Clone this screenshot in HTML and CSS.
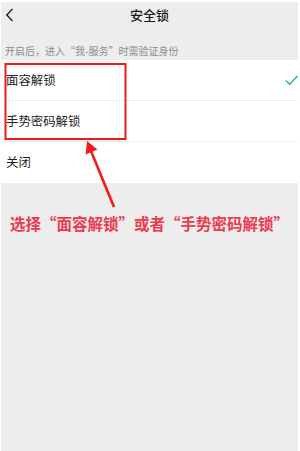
FILE: index.html
```html
<!DOCTYPE html>
<html lang="zh">
<head>
<meta charset="utf-8">
<link rel="stylesheet" href="styles.css">
</head>
<body>
<div class="page">
  <div class="nav">
    <div class="back">
      <svg width="9" height="14" viewBox="0 0 9 14"><path d="M7.5 1 L1.8 7 L7.5 13" fill="none" stroke="#222" stroke-width="1.4"/></svg>
    </div>
    <div class="title">安全锁</div>
    <div></div>
  </div>
  <div class="hint">开启后，进入“我-服务”时需验证身份</div>
  <div class="list">
    <div class="row"><span>面容解锁</span>
      <svg class="check" width="13" height="11" viewBox="0 0 13 11"><path d="M0.8 5.5 L4.6 9.3 L12.5 1" fill="none" stroke="#1fc063" stroke-width="1.4"/></svg>
    </div>
    <div class="row"><span>手势密码解锁</span></div>
    <div class="row"><span>关闭</span></div>
  </div>
  <div class="note">选择“面容解锁”或者“手势密码解锁”</div>
</div>
<svg class="overlay" width="300" height="451" viewBox="0 0 300 451">
  <rect x="5.5" y="64" width="120" height="75" fill="none" stroke="#f21a1a" stroke-width="2"/>
  <line x1="114" y1="207" x2="91" y2="151" stroke="#f21a1a" stroke-width="2.6"/>
  <polygon points="87,141 85.6,154.6 97.4,149.6" fill="#f21a1a"/>
</svg>
</body>
</html>
```
FILE: styles.css
```css
html, body {
  margin: 0;
  padding: 0;
  background: #ffffff;
}
body {
  position: relative;
  width: 300px;
  height: 451px;
  overflow: hidden;
  font-family: "Noto Sans CJK SC", "Noto Sans", sans-serif;
}
.page {
  margin: 2px 2px 0 1px;
  height: 449px;
  background: #ededed;
  display: flex;
  flex-direction: column;
}
.nav {
  height: 26px;
  display: grid;
  grid-template-columns: 1fr auto 1fr;
  align-items: center;
}
.back {
  padding-left: 4px;
  display: flex;
  align-items: center;
}
.title {
  font-size: 13px;
  color: #1a1a1a;
  font-weight: 500;
  line-height: 16px;
}
.hint {
  height: 32px;
  box-sizing: border-box;
  display: flex;
  align-items: flex-end;
  padding: 0 0 2px 4px;
  font-size: 10px;
  line-height: 14px;
  color: #8c8c8c;
}
.list {
  background: #ffffff;
  padding-left: 5px;
}
.row {
  height: 41px;
  box-sizing: border-box;
  display: flex;
  align-items: center;
  justify-content: space-between;
  font-size: 12.4px;
  color: #222;
  border-bottom: 1px solid #f0f0f0;
}
.row:last-child {
  border-bottom: none;
}
.row span {
  position: relative;
  top: -0.5px;
}
.note {
  margin-top: 30px;
  text-align: center;
  font-size: 15.5px;
  line-height: 20px;
  font-weight: 700;
  color: #ec3a4c;
  letter-spacing: 0;
}
.overlay {
  position: absolute;
  top: 0;
  left: 0;
  pointer-events: none;
}
```
